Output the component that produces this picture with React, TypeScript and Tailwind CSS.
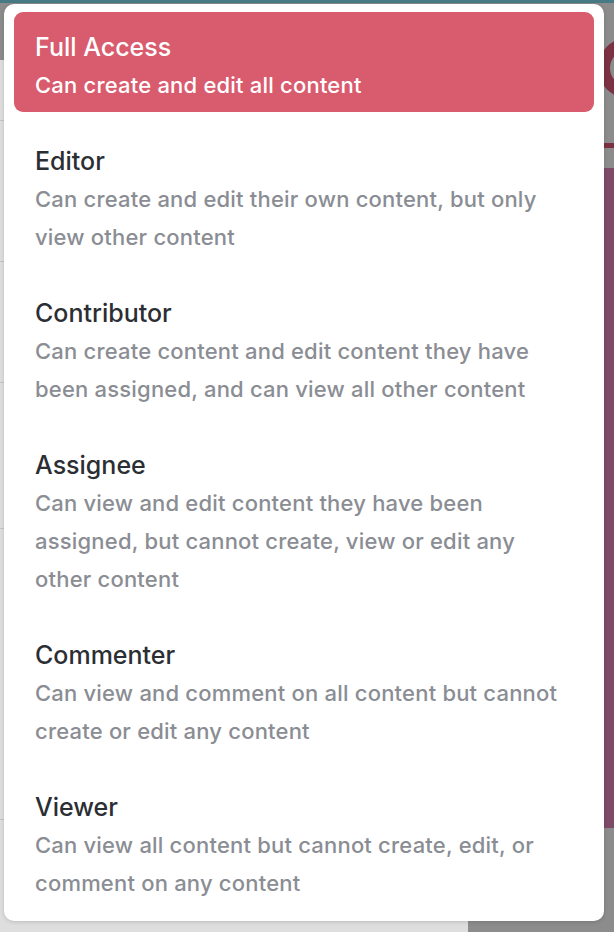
import React from "react";

const items = [
  { title: "Full Access", desc: ["Can create and edit all content"], active: true },
  { title: "Editor", desc: ["Can create and edit their own content, but only", "view other content"] },
  { title: "Contributor", desc: ["Can create content and edit content they have", "been assigned, and can view all other content"] },
  { title: "Assignee", desc: ["Can view and edit content they have been", "assigned, but cannot create, view or edit any", "other content"] },
  { title: "Commenter", desc: ["Can view and comment on all content but cannot", "create or edit any content"] },
  { title: "Viewer", desc: ["Can view all content but cannot create, edit, or", "comment on any content"] },
];

function MenuItem({ title, desc, active }: { title: string; desc: string[]; active?: boolean }) {
  return (
    <div
      className={
        active
          ? "rounded-[9px] bg-[#d95b6e] pl-[21px] pr-4 pt-[16px] pb-[8px]"
          : "pl-[21px] pr-4 pt-[16px] pb-[8px]"
      }
    >
      <div
        className={
          active
            ? "text-[25px] leading-[38px] font-medium text-white"
            : "text-[25px] leading-[38px] font-medium text-[#2b2e33]"
        }
      >
        {title}
      </div>
      {desc.map((d) => (
        <div
          key={d}
          className={
            active
              ? "text-[22px] leading-[38px] font-medium tracking-[0.2px] text-white whitespace-nowrap"
              : "text-[22px] leading-[38px] font-medium tracking-[0.2px] text-[#8a8d93] whitespace-nowrap"
          }
        >
          {d}
        </div>
      ))}
    </div>
  );
}

export default function App() {
  return (
    <div
      className="relative w-[614px] h-[932px] overflow-hidden bg-[#8c8c8c] flex flex-col"
      style={{ fontFamily: "Inter, 'Noto Sans', sans-serif" }}
    >
      {/* background page behind the overlay */}
      <div className="h-[3px] bg-[#467a86] shrink-0" />
      <div className="flex flex-1">
        <div className="w-[468px] flex flex-col pt-[57px]">
          <div className="flex-1 bg-[#dedede] flex flex-col">
            <div className="mt-[60px] h-px bg-[#c4c4c4]" />
            <div className="mt-[140px] h-px bg-[#c4c4c4]" />
            <div className="mt-[120px] h-px bg-[#c4c4c4]" />
            <div className="mt-[145px] h-px bg-[#c4c4c4]" />
            <div className="mt-[290px] h-px bg-[#c4c4c4]" />
          </div>
        </div>
        <div className="flex-1 flex flex-col items-end">
          <div className="mt-[35px] mr-[-44px] w-[60px] h-[60px] rounded-full border-[12px] border-[#7b3343]" />
          <div className="mt-[45px] w-[20px] h-[5px] bg-[#7b3040]" />
          <div className="mt-[20px] w-[20px] h-[660px] bg-[#7d4a68]" />
        </div>
      </div>

      {/* menu */}
      <div className="absolute left-[4px] top-[4px] w-[600px] h-[917px] rounded-[10px] bg-white shadow-[0_1px_4px_rgba(0,0,0,0.15)] px-[10px] pt-[8px] flex flex-col gap-[14px]">
        {items.map((it) => (
          <MenuItem key={it.title} title={it.title} desc={it.desc} active={it.active} />
        ))}
      </div>
    </div>
  );
}
